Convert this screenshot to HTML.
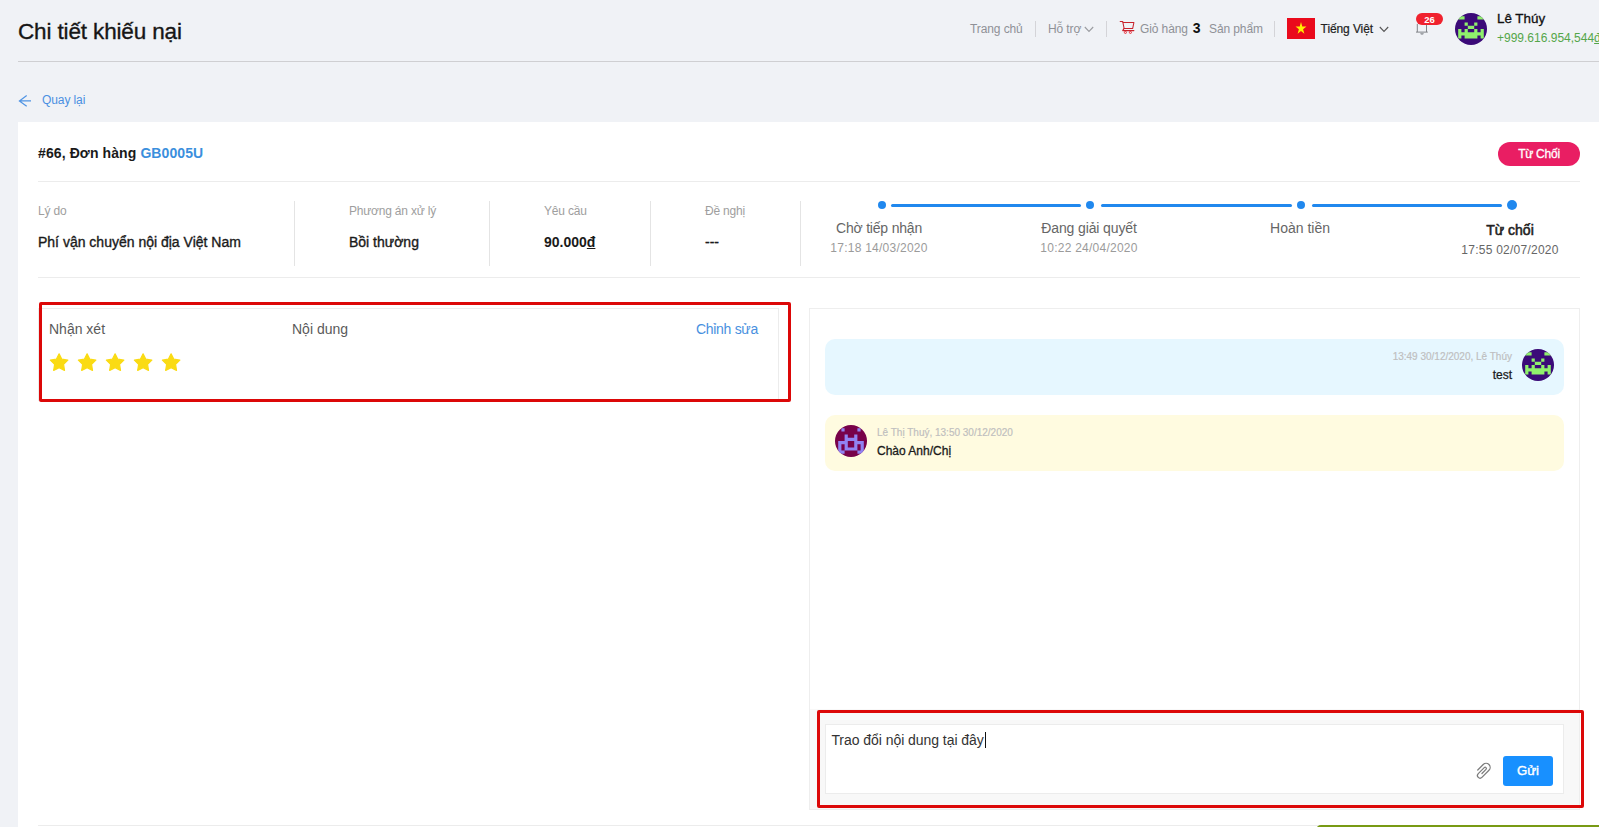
<!DOCTYPE html>
<html lang="vi">
<head>
<meta charset="utf-8">
<title>Chi tiết khiếu nại</title>
<style>
*{box-sizing:border-box;margin:0;padding:0}
html,body{width:1599px;height:827px;overflow:hidden}
body{background:#f0f2f6;font-family:"Liberation Sans",sans-serif;color:#1a1a1a;position:relative;font-size:12px}
.abs{position:absolute;white-space:nowrap}
.t{position:absolute;white-space:nowrap;line-height:1}
#title{left:18px;top:21px;font-size:22.5px;color:#161616;letter-spacing:-0.14px;-webkit-text-stroke:0.35px #161616}
#hline{left:18px;top:61px;width:1581px;height:1px;background:#cfcfd2}
.nav{color:#8f9197;font-size:12px;letter-spacing:-0.1px}
.med{-webkit-text-stroke:0.35px currentColor}
.vsep{position:absolute;width:1px;background:#d4d4d8}
#card{left:18px;top:122px;width:1581px;height:705px;background:#fff}
.lbl{color:#9e9e9e;font-size:12px;letter-spacing:-0.2px}
.val{color:#1a1a1a;font-size:14px;-webkit-text-stroke:0.35px #1a1a1a}
.hsep{position:absolute;height:1px;background:#ececec}
.step{position:absolute;text-align:center;white-space:nowrap;line-height:1;transform:translateX(-50%)}
</style>
</head>
<body>
<!-- header -->
<div class="t" id="title">Chi tiết khiếu nại</div>
<div class="abs" id="hline"></div>

<div class="t nav" style="left:970px;top:23px">Trang chủ</div>
<div class="vsep" style="left:1035px;top:21px;height:16px"></div>
<div class="t nav" style="left:1048px;top:23px">Hỗ trợ</div>
<svg class="abs" style="left:1084px;top:26px" width="10" height="7" viewBox="0 0 10 7"><path d="M0.8 1 L5 5.4 L9.2 1" fill="none" stroke="#9a9ca0" stroke-width="1.1"/></svg>
<div class="vsep" style="left:1106px;top:21px;height:16px"></div>
<svg class="abs" style="left:1119px;top:20px" width="16" height="15" viewBox="0 0 16 15"><g fill="none" stroke="#c8222c" stroke-width="1.05" stroke-linejoin="round" stroke-linecap="round"><path d="M1.2 1.4 H3.7 L5.1 8.4"/><path d="M4.1 2.5 H14.9 L13.7 8.4 H5.1 L3.7 10.6 H14.9"/></g><circle cx="6.4" cy="12.4" r="1.05" fill="none" stroke="#e8202c" stroke-width="0.9"/><circle cx="11.4" cy="12.4" r="1.05" fill="none" stroke="#e8202c" stroke-width="0.9"/></svg>
<div class="t nav" style="left:1140px;top:23px">Giỏ hàng</div>
<div class="t" style="left:1192.8px;top:21.3px;font-size:14px;font-weight:bold;color:#111">3</div>
<div class="t nav" style="left:1209px;top:23px">Sản phẩm</div>
<div class="vsep" style="left:1274px;top:21px;height:16px"></div>
<svg class="abs" style="left:1287px;top:18.4px" width="28" height="21" viewBox="0 0 28 21"><rect width="28" height="21" fill="#ea0a1c"/><path d="M14 3.9 L15.29 8.46 L19.47 8.46 L16.09 11.28 L17.38 15.84 L14 13.02 L10.62 15.84 L11.91 11.28 L8.53 8.46 L12.71 8.46 Z" fill="#ffee00"/></svg>
<div class="t" style="left:1320.6px;top:23px;font-size:12px;color:#222;letter-spacing:-0.1px;-webkit-text-stroke:0.2px #222">Tiếng Việt</div>
<svg class="abs" style="left:1379px;top:26px" width="10" height="7" viewBox="0 0 10 7"><path d="M0.8 1 L5 5.4 L9.2 1" fill="none" stroke="#555" stroke-width="1.1"/></svg>

<!-- bell -->
<svg class="abs" style="left:1414px;top:22px" width="16" height="14" viewBox="0 0 16 14"><path d="M3.3 2 V10 M12.5 2 V10 M2 10.1 H13.8" fill="none" stroke="#808388" stroke-width="1"/><path d="M6.1 10.8 A1.9 2.1 0 0 0 9.9 10.8 Z" fill="#a0a3a8"/></svg>
<div class="abs" style="left:1416px;top:12.7px;width:27px;height:12.4px;border-radius:6.2px;background:#f0222e;color:#fff;font-size:9.5px;font-weight:bold;text-align:center;line-height:14.4px">26</div>

<!-- avatar -->
<svg class="abs" style="left:1455px;top:13px" width="32" height="32" viewBox="0 0 10 10"><defs><clipPath id="c1"><circle cx="5" cy="5" r="5"/></clipPath></defs><g clip-path="url(#c1)"><rect width="10" height="10" fill="#3b0a78"/><path fill="#8ff06c" d="M1 1h2v1h-2z M7 1h2v1h-2z M3 3h1v1h-1z M6 3h1v1h-1z M4 4h2v1h-2z M1 5h1v1h1v-1h1v1h2v-1h1v1h1v-1h1v3h-1v-1h-1v1h-4v-1h-1v1h-1z"/></g></svg>
<div class="t" style="left:1497px;top:12px;font-size:13.4px;color:#111;-webkit-text-stroke:0.3px #111">Lê Thúy</div>
<div class="t" style="left:1497px;top:32px;font-size:12px;color:#55a64a">+999.616.954,544<u>đ</u></div>

<!-- back -->
<svg class="abs" style="left:18px;top:95px" width="14" height="12" viewBox="0 0 14 12"><path d="M13 5.9 H1.6 M8.7 0.5 L1.4 5.9 L8.7 11.3" fill="none" stroke="#4f94e4" stroke-width="1.2"/></svg>
<div class="t" style="left:42px;top:94px;font-size:12px;color:#4a90e2;letter-spacing:-0.1px">Quay lại</div>

<!-- card -->
<div class="abs" id="card"></div>
<div class="t" style="left:38px;top:146px;font-size:14px;font-weight:bold;color:#1a1a1a;letter-spacing:0.1px">#66, Đơn hàng <span style="color:#3b8fdd">GB0005U</span></div>
<div class="abs" style="left:1498px;top:142px;width:82px;height:24px;border-radius:12px;background:#e91e63;color:#fff;font-size:12px;text-align:center;line-height:25px;letter-spacing:-0.25px;-webkit-text-stroke:0.3px #fff">Từ Chối</div>
<div class="hsep" style="left:38px;top:181px;width:1542px"></div>

<div class="t lbl" style="left:38px;top:205px">Lý do</div>
<div class="t val" style="left:38px;top:235px">Phí vận chuyển nội địa Việt Nam</div>
<div class="vsep" style="left:294px;top:201px;height:65px;background:#e4e4e4"></div>
<div class="t lbl" style="left:349px;top:205px">Phương án xử lý</div>
<div class="t val" style="left:349px;top:235px">Bồi thường</div>
<div class="vsep" style="left:489px;top:201px;height:65px;background:#e4e4e4"></div>
<div class="t lbl" style="left:544px;top:205px">Yêu cầu</div>
<div class="t val" style="left:544px;top:235px;font-weight:bold;-webkit-text-stroke:0">90.000<u>đ</u></div>
<div class="vsep" style="left:650px;top:201px;height:65px;background:#e4e4e4"></div>
<div class="t lbl" style="left:705px;top:205px">Đề nghị</div>
<div class="t val" style="left:705px;top:235px">---</div>
<div class="vsep" style="left:800px;top:201px;height:65px;background:#e4e4e4"></div>
<div class="hsep" style="left:38px;top:277px;width:1542px"></div>

<!-- timeline -->
<div class="abs" style="left:891px;top:203.5px;width:190px;height:3px;background:#2088ee;border-radius:2px"></div>
<div class="abs" style="left:1101px;top:203.5px;width:191px;height:3px;background:#2088ee;border-radius:2px"></div>
<div class="abs" style="left:1312px;top:203.5px;width:190px;height:3px;background:#2088ee;border-radius:2px"></div>
<div class="abs" style="left:878px;top:201px;width:8px;height:8px;border-radius:50%;background:#2088ee"></div>
<div class="abs" style="left:1086px;top:201px;width:8px;height:8px;border-radius:50%;background:#2088ee"></div>
<div class="abs" style="left:1297px;top:201px;width:8px;height:8px;border-radius:50%;background:#2088ee"></div>
<div class="abs" style="left:1507px;top:200px;width:10px;height:10px;border-radius:50%;background:#2088ee"></div>
<div class="step" style="left:879px;top:221px;font-size:14px;letter-spacing:-0.2px;color:#666">Chờ tiếp nhận</div>
<div class="step" style="left:879px;top:242px;font-size:12px;letter-spacing:0.25px;color:#9b9b9b">17:18 14/03/2020</div>
<div class="step" style="left:1089px;top:221px;font-size:14px;letter-spacing:-0.13px;color:#666">Đang giải quyết</div>
<div class="step" style="left:1089px;top:242px;font-size:12px;letter-spacing:0.25px;color:#9b9b9b">10:22 24/04/2020</div>
<div class="step" style="left:1300px;top:221px;font-size:14px;color:#666">Hoàn tiền</div>
<div class="step" style="left:1510px;top:223px;font-size:14px;color:#222;-webkit-text-stroke:0.55px #222">Từ chối</div>
<div class="step" style="left:1510px;top:244px;font-size:12px;letter-spacing:0.25px;color:#666">17:55 02/07/2020</div>

<!-- review -->
<div class="abs" style="left:38px;top:308px;width:741px;height:93px;border:1px solid #ececec;background:#fff"></div>
<div class="abs" style="left:39px;top:302px;width:752px;height:100px;border:3px solid #dc0808;border-radius:2px"></div>
<div class="t" style="left:49px;top:322px;font-size:14px;color:#5a5a5a">Nhận xét</div>
<div class="t" style="left:292px;top:322px;font-size:14px;color:#5a5a5a">Nội dung</div>
<div class="t" style="left:696px;top:322px;font-size:14px;letter-spacing:-0.3px;color:#4890e0">Chỉnh sửa</div>
<svg class="abs" style="left:48px;top:351px" width="136" height="22" viewBox="0 0 136 22"><defs><path id="st" d="M0 -9.2 L2.76 -3.8 L8.75 -2.84 L4.47 1.45 L5.41 7.44 L0 4.7 L-5.41 7.44 L-4.47 1.45 L-8.75 -2.84 L-2.76 -3.8 Z" fill="#fadb14" stroke="#fadb14" stroke-width="1.2" stroke-linejoin="round"/></defs><use href="#st" x="11.1" y="12"/><use href="#st" x="39.1" y="12"/><use href="#st" x="67.1" y="12"/><use href="#st" x="95.1" y="12"/><use href="#st" x="123.1" y="12"/></svg>

<!-- chat -->
<div class="abs" style="left:809px;top:308px;width:771px;height:502px;border:1px solid #eee;background:#fff"></div>
<div class="abs" style="left:825px;top:339px;width:739px;height:56px;border-radius:10px;background:#e6f7ff"></div>
<div class="t" style="right:87px;top:352px;font-size:10px;color:#bfbfbf;-webkit-text-stroke:0.2px #bfbfbf">13:49 30/12/2020, Lê Thúy</div>
<div class="t" style="right:87px;top:369px;font-size:12px;color:#1a1a1a;-webkit-text-stroke:0.25px #1a1a1a">test</div>
<svg class="abs" style="left:1522px;top:349px" width="32" height="32" viewBox="0 0 10 10"><g clip-path="url(#c1)"><rect width="10" height="10" fill="#3b0a78"/><path fill="#8ff06c" d="M1 1h2v1h-2z M7 1h2v1h-2z M3 3h1v1h-1z M6 3h1v1h-1z M4 4h2v1h-2z M1 5h1v1h1v-1h1v1h2v-1h1v1h1v-1h1v3h-1v-1h-1v1h-4v-1h-1v1h-1z"/></g></svg>

<div class="abs" style="left:825px;top:415px;width:739px;height:56px;border-radius:10px;background:#fffbe0"></div>
<svg class="abs" style="left:835px;top:425px" width="32" height="32" viewBox="0 0 10 10"><g clip-path="url(#c1)"><rect width="10" height="10" fill="#78024a"/><path fill="#9183f2" fill-rule="evenodd" d="M2 1h1v1h-1z M7 1h1v1h-1z M3 3h1v1h2v-1h1v2h2v4h-2v-1h-4v1h-2v-4h2z M2 6h1v2h-1z M7 6h1v2h-1z M4 5h2v2h-2z"/></g></svg>
<div class="t" style="left:877px;top:428.3px;font-size:10px;color:#bfbfbf;-webkit-text-stroke:0.2px #bfbfbf">Lê Thị Thuý, 13:50 30/12/2020</div>
<div class="t" style="left:877px;top:445px;font-size:12px;color:#1a1a1a;-webkit-text-stroke:0.3px #1a1a1a">Chào Anh/Chị</div>

<!-- input -->
<div class="abs" style="left:810px;top:709px;width:769px;height:100px;background:#f8f8f8"></div>
<div class="abs" style="left:825px;top:724px;width:739px;height:70px;border:1px solid #ececec;background:#fff"></div>
<div class="t" style="left:831.4px;top:733px;font-size:14px;color:#333;letter-spacing:-0.05px">Trao đổi nội dung tại đây</div>
<div class="abs" style="left:985px;top:732px;width:1px;height:16px;background:#111"></div>
<svg class="abs" style="left:1472px;top:759px" width="24" height="24" viewBox="-12 -12 24 24"><path transform="rotate(45)" d="M-5.1 3.75 L-5.1 -4 A4.05 4.05 0 0 1 3 -4 L3 5.95 A2.6 2.6 0 0 1 -2.2 5.95 L-2.2 -2.55 A1.25 1.25 0 0 1 0.3 -2.55 L0.3 3.2" fill="none" stroke="#7c7c7c" stroke-width="1.25" stroke-linecap="round"/></svg>
<div class="abs" style="left:1503px;top:756px;width:50px;height:30px;border-radius:3px;background:#1890ff;color:#fff;font-size:13.2px;letter-spacing:0px;-webkit-text-stroke:0.4px #fff;text-align:center;line-height:30px">Gửi</div>
<div class="abs" style="left:817px;top:710px;width:767px;height:98px;border:3px solid #dc0808;border-radius:2px"></div>

<!-- bottom -->
<div class="hsep" style="left:38px;top:825px;width:1542px"></div>
<div class="abs" style="left:1315.5px;top:824.8px;width:290px;height:10px;border-radius:5px 0 0 0;background:#789a14"></div>
</body>
</html>
